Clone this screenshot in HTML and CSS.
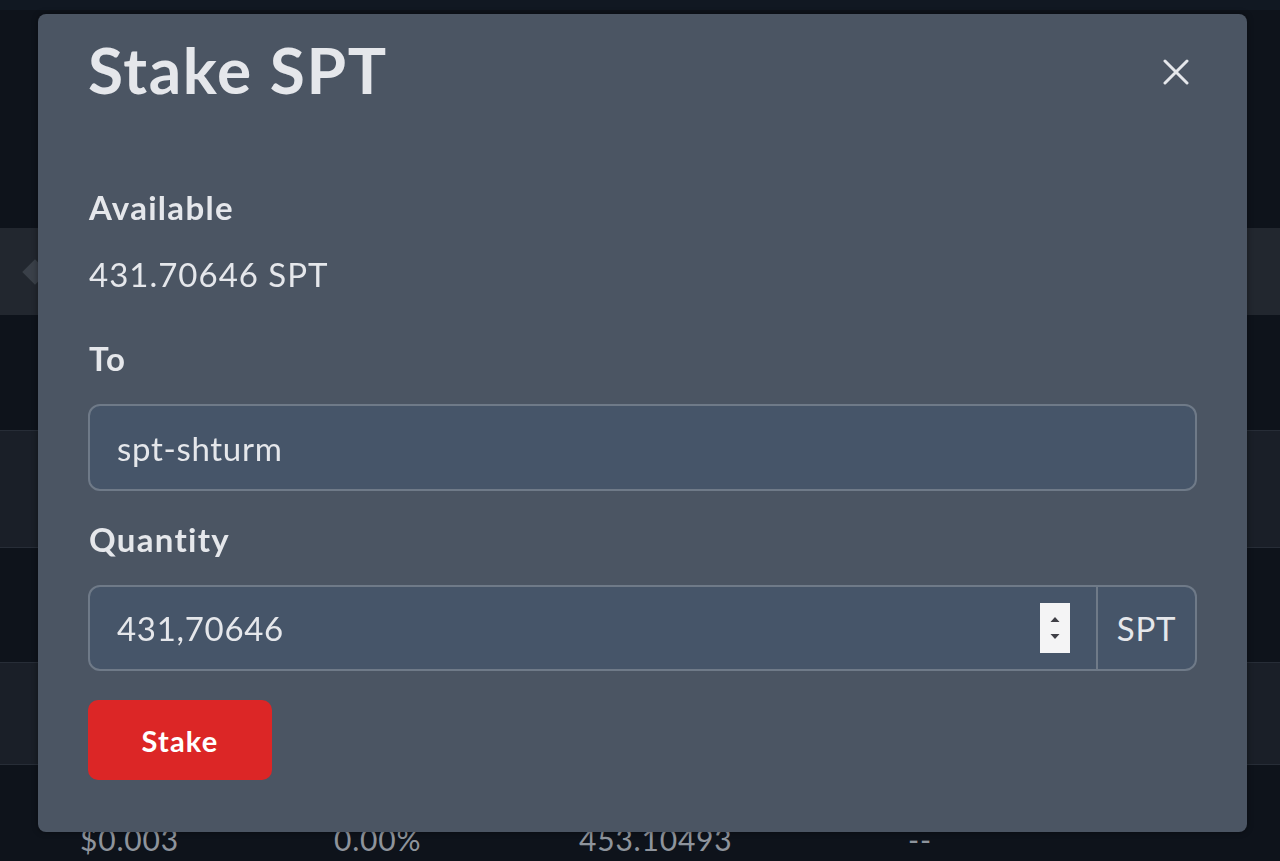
FILE: index.html
```html
<!DOCTYPE html>
<html lang="en">
<head>
<meta charset="utf-8">
<title>Stake SPT</title>
<link rel="stylesheet" href="styles.css">
</head>
<body>
<div class="page">
  <div class="row row-top"></div>
  <div class="row row-tool"><span class="tool-icon"></span></div>
  <div class="row row-dark r1"></div>
  <div class="row row-band r2"></div>
  <div class="row row-dark r3"></div>
  <div class="row row-band r4"></div>
  <div class="row row-data">
    <span class="cell c1">$0.003</span>
    <span class="cell c2">0.00%</span>
    <span class="cell c3">453.10493</span>
    <span class="cell c4">--</span>
  </div>
</div>

<div class="overlay">
  <div class="modal">
    <div class="modal-header">
      <h2 class="modal-title">Stake SPT</h2>
      <button class="close" type="button" aria-label="Close">
        <svg width="26" height="26" viewBox="0 0 26 26"><path d="M2 2 L24 24 M24 2 L2 24" stroke="#e5e7eb" stroke-width="3" stroke-linecap="round" fill="none"/></svg>
      </button>
    </div>
    <div class="modal-body">
      <div class="label">Available</div>
      <div class="value">431.70646 SPT</div>
      <div class="label label-to">To</div>
      <div class="field">spt-shturm</div>
      <div class="label label-qty">Quantity</div>
      <div class="group">
        <div class="field field-num">
          <span class="num-text">431,70646</span>
          <span class="spinner">
            <svg width="30" height="50" viewBox="0 0 30 50"><path d="M10.5 19 L15 14 L19.5 19 Z" fill="#3f3f46"/><path d="M10.5 31 L15 36 L19.5 31 Z" fill="#3f3f46"/></svg>
          </span>
        </div>
        <div class="addon">SPT</div>
      </div>
      <button class="btn-stake" type="button">Stake</button>
    </div>
  </div>
</div>
</body>
</html>
```

FILE: styles.css
```css
* { box-sizing: border-box; }
html, body { margin: 0; padding: 0; }
body {
  background: #0e131b;
  font-family: Lato, "Open Sans", "Liberation Sans", sans-serif;
  width: 1280px;
  height: 861px;
  overflow: hidden;
}
.page { display: flex; flex-direction: column; }
.row { width: 100%; }
.row-top { height: 228px; background: #0e131b; border-top: 10px solid #111822; }
.row-tool { height: 87px; background: #22272f; display: flex; align-items: center; padding-left: 26px; }
.tool-icon { width: 18px; height: 18px; background: #3a4049; transform: rotate(45deg); }
.r1 { height: 115px; background: #0e131b; }
.r2 { height: 118px; background: #1a1f28; border-top: 1px solid #272d37; border-bottom: 1px solid #272d37; }
.r3 { height: 114px; background: #0e131b; }
.r4 { height: 103px; background: #1a1f28; border-top: 1px solid #272d37; border-bottom: 1px solid #272d37; }
.row-data { height: 96px; background: #0e131b; display: flex; padding-top: 56px; font-size: 30px; color: #8e949c; line-height: 36px; letter-spacing: 0.8px; }
.cell { display: block; }
.c1 { margin-left: 80px; width: 254px; }
.c2 { width: 245px; }
.c3 { width: 329px; }

.overlay {
  position: fixed;
  inset: 0;
  padding: 14px 33px 0 38px;
}
.modal {
  background: #4b5563;
  border-radius: 8px;
  padding: 17px 50px 52px 50px;
  box-shadow: 0 0 6px rgba(0,0,0,0.4);
  color: #e5e7eb;
}
.modal-header { display: flex; justify-content: space-between; align-items: center; }
.modal-title {
  margin: 0;
  font-size: 64px;
  line-height: 77px;
  font-weight: 700;
  letter-spacing: 1.6px;
  color: #e5e7eb;
}
.close {
  background: none; border: 0; padding: 0;
  width: 40px; height: 40px;
  display: flex; align-items: center; justify-content: center;
  margin-top: 5px;
  margin-right: 1px;
}
.modal-body { display: flex; flex-direction: column; align-items: flex-start; padding-top: 79px; }
.label { font-size: 33px; line-height: 40px; font-weight: 700; letter-spacing: 1.3px; color: #e5e7eb; padding-left: 1px; }
.value { font-size: 33px; line-height: 40px; margin-top: 27px; letter-spacing: 1px; padding-left: 1px; }
.label-to { margin-top: 44px; }
.label-qty { margin-top: 28px; }
.field {
  margin-top: 26px;
  width: 100%;
  height: 87px;
  background: #465569;
  border: 2px solid #6f7a88;
  border-radius: 12px;
  font-size: 33px;
  letter-spacing: 0.7px;
  color: #e5e7eb;
  display: flex;
  align-items: center;
  padding: 0 26px 0 27px;
}
.group { display: flex; width: 100%; margin-top: 26px; height: 86px; }
.group .field { margin-top: 0; height: 86px; border-radius: 12px 0 0 12px; flex: 1; }
.num-text { flex: 1; }
.spinner { width: 30px; height: 50px; background: #f4f4f5; display: flex; }
.addon {
  width: 99px;
  background: #465569;
  border: 2px solid #6f7a88;
  border-left: 0;
  border-radius: 0 12px 12px 0;
  display: flex; align-items: center; justify-content: center;
  font-size: 33px; letter-spacing: 0.7px; color: #e5e7eb;
}
.btn-stake {
  margin-top: 29px;
  width: 184px; height: 80px;
  background: #dc2626;
  border: 0; border-radius: 10px;
  color: #ffffff;
  font-family: inherit;
  font-size: 29px; font-weight: 700;
  letter-spacing: 1.2px;
}
```
